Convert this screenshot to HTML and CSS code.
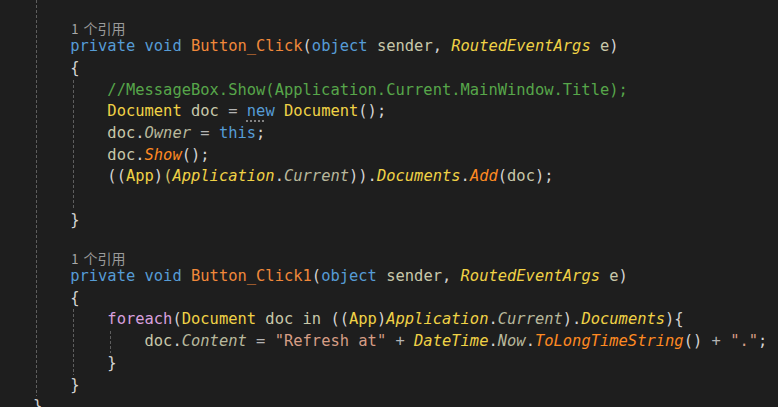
FILE: index.html
```html
<!DOCTYPE html>
<html>
<head>
<meta charset="utf-8">
<link rel="stylesheet" href="styles.css">
</head>
<body>
<div class="editor">
  <div class="block top">
    <div class="line"></div>
    <div class="lens"><span class="lens-n">1</span> 个引用</div>
    <div class="line"><span class="kw">private</span> <span class="kw">void</span> <span class="fn">Button_Click</span><span class="pn">(</span><span class="kw">object</span> <span class="id">sender</span><span class="pn">,</span> <span class="ty it">RoutedEventArgs</span> <span class="id">e</span><span class="pn">)</span></div>
    <div class="line pn">{</div>
    <div class="block">
      <div class="line cm">//MessageBox.Show(Application.Current.MainWindow.Title);</div>
      <div class="line"><span class="ty">Document</span> <span class="id">doc</span> <span class="op">=</span> <span class="kw"><span class="hint">ne</span>w</span> <span class="ty">Document</span><span class="pn">();</span></div>
      <div class="line"><span class="id">doc</span><span class="pn">.</span><span class="pr it">Owner</span> <span class="op">=</span> <span class="kw">this</span><span class="pn">;</span></div>
      <div class="line"><span class="id">doc</span><span class="pn">.</span><span class="fc it">Show</span><span class="pn">();</span></div>
      <div class="line"><span class="pn">((</span><span class="ty">App</span><span class="pn">)</span><span class="py">(</span><span class="ty it">Application</span><span class="pn">.</span><span class="pr it">Current</span><span class="pn">)).</span><span class="ty it">Documents</span><span class="pn">.</span><span class="fc it">Add</span><span class="pn">(</span><span class="id">doc</span><span class="pn">);</span></div>
      <div class="line"></div>
    </div>
    <div class="line pn">}</div>
    <div class="line"></div>
    <div class="lens"><span class="lens-n">1</span> 个引用</div>
    <div class="line"><span class="kw">private</span> <span class="kw">void</span> <span class="fn">Button_Click1</span><span class="pn">(</span><span class="kw">object</span> <span class="id">sender</span><span class="pn">,</span> <span class="ty it">RoutedEventArgs</span> <span class="id">e</span><span class="pn">)</span></div>
    <div class="line pn">{</div>
    <div class="block">
      <div class="line"><span class="ctl">foreach</span><span class="pn">(</span><span class="ty">Document</span> <span class="id">doc</span> <span class="id">in</span> <span class="pn">((</span><span class="ty">App</span><span class="pn">)</span><span class="ty it">Application</span><span class="pn">.</span><span class="pr it">Current</span><span class="pn">).</span><span class="ty it">Documents</span><span class="pn">){</span></div>
      <div class="block">
        <div class="line"><span class="id">doc</span><span class="pn">.</span><span class="pr it">Content</span> <span class="op">=</span> <span class="st">"Refresh at"</span> <span class="op">+</span> <span class="ty it">DateTime</span><span class="pn">.</span><span class="pr it">Now</span><span class="pn">.</span><span class="fc it">ToLongTimeString</span><span class="pn">()</span> <span class="op">+</span> <span class="st">"."</span><span class="pn">;</span></div>
      </div>
      <div class="line pn">}</div>
    </div>
    <div class="line pn">}</div>
  </div>
  <div class="line pn">}</div>
</div>
</body>
</html>
```
FILE: styles.css
```css
html, body {
  margin: 0;
  padding: 0;
  background: #1e1e1e;
  overflow: hidden;
}
.editor {
  width: 778px;
  height: 407px;
  padding-left: 33px;
  box-sizing: border-box;
  font-family: "DejaVu Sans Mono", "Liberation Mono", monospace;
  font-size: 15.45px;
  line-height: 21.7px;
  color: #dcdcdc;
  overflow: hidden;
}
.line {
  height: 21.7px;
  white-space: pre;
}
.top {
  padding-top: 1.5px;
}
.block {
  padding-left: 4ch;
  background-image: linear-gradient(#5e5e5e 60%, transparent 60%);
  background-size: 1px 5px;
  background-repeat: repeat-y;
  background-position: 3px 0;
}
.lens {
  height: 13px;
  white-space: pre;
  font-family: "Noto Sans CJK SC", "DejaVu Sans", sans-serif;
  font-size: 14px;
  line-height: 11px;
  color: #9a9a9a;
  padding-left: 1px;
}
.lens-n {
  color: #a8a8a8;
  font-size: 13px;
  margin-right: 2px;
}
.kw { color: #569cd6; }
.fn { color: #f0883a; }
.fc { color: #ff8a22; }
.ty { color: #f0d246; }
.id { color: #c8c8aa; }
.pr { color: #b8b89c; }
.op { color: #b4b4b4; }
.pn { color: #d4d4d4; }
.py { color: #d6c26a; }
.cm { color: #57a64a; }
.ctl { color: #d8a0df; }
.st { color: #d69d85; }
.it { font-style: italic; }
.hint {
  text-decoration: underline dotted #a0a0a0;
  text-underline-offset: 4px;
}
```
